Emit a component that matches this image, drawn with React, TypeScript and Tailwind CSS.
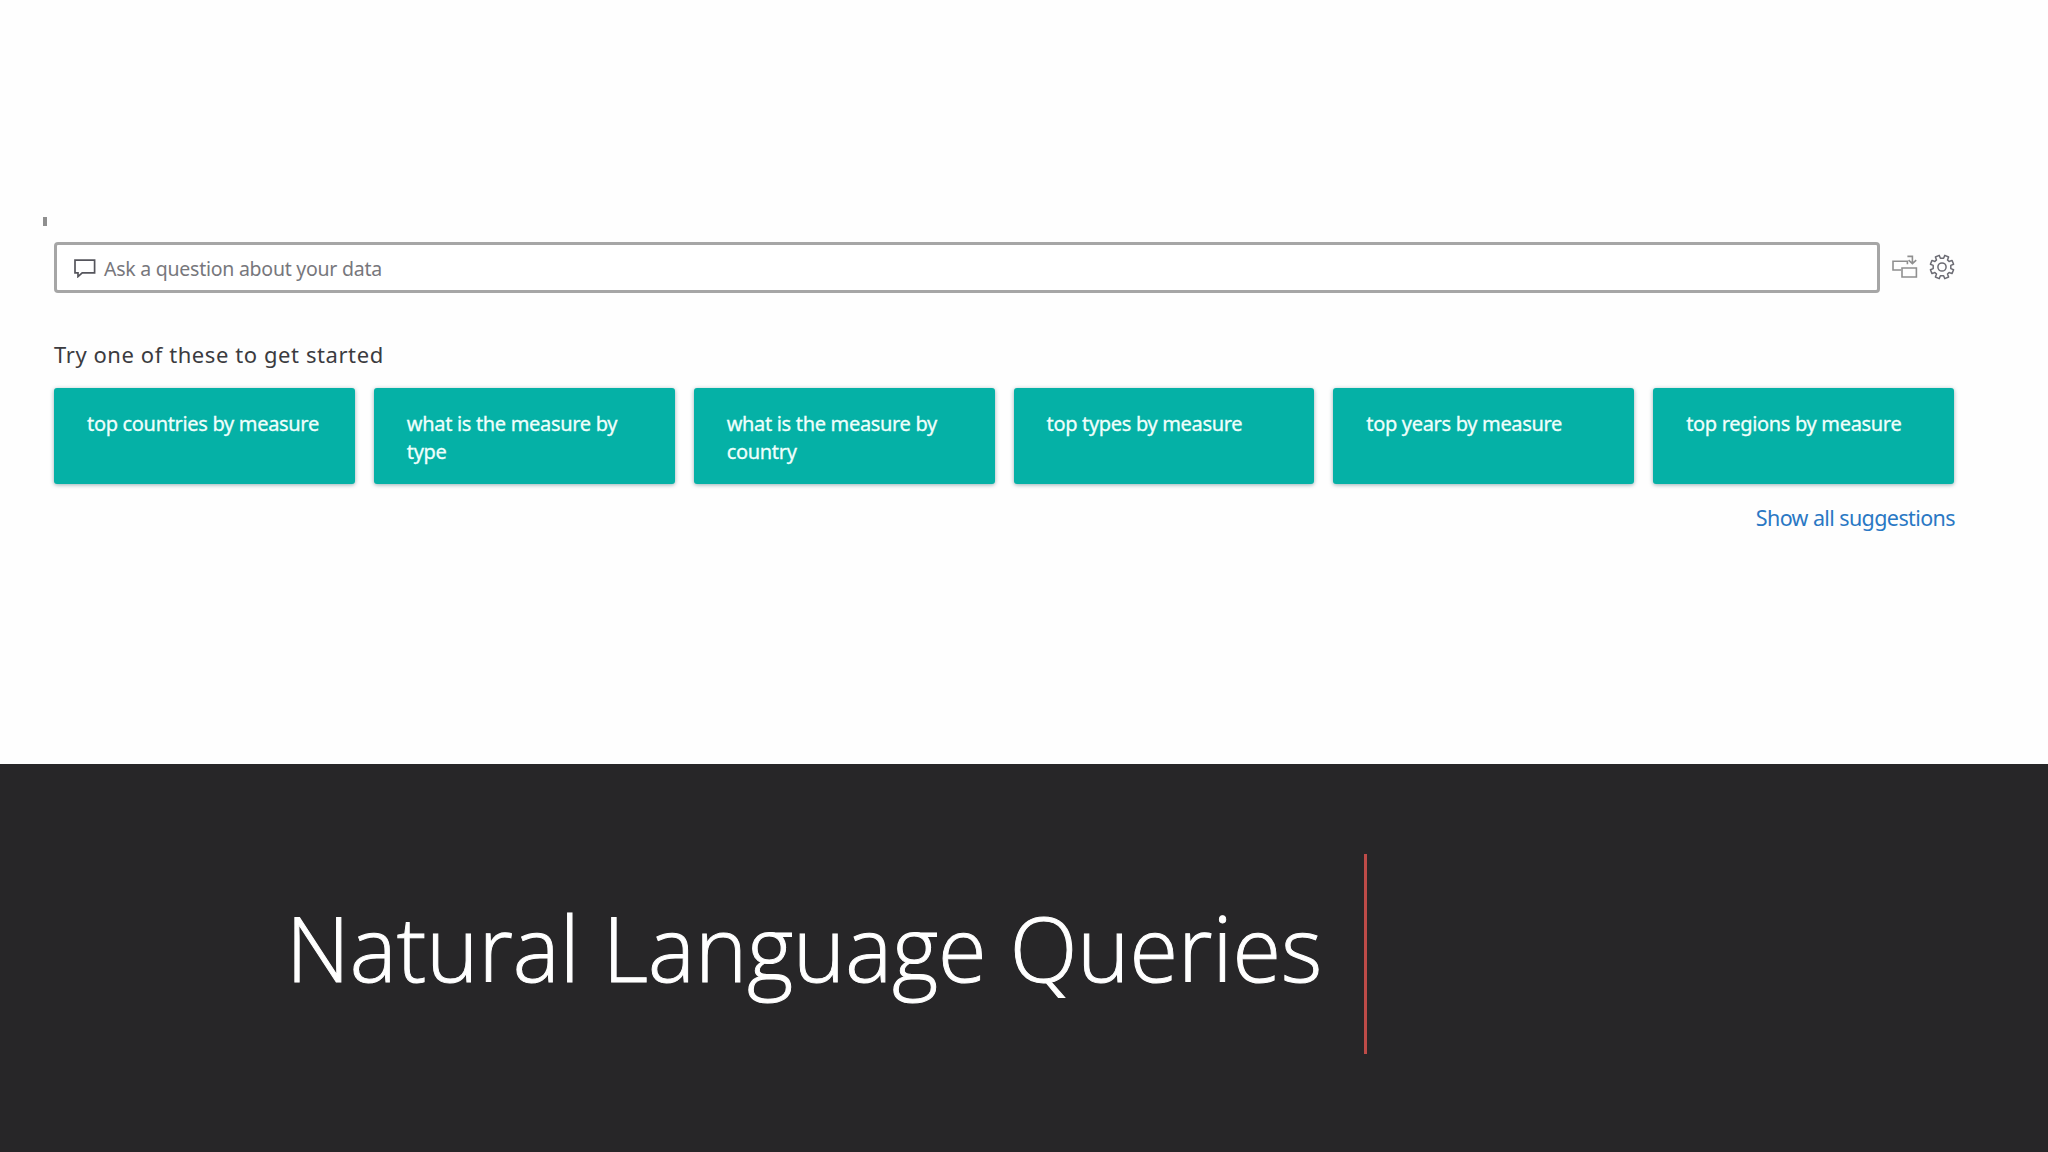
const suggestions = [
  "top countries by measure",
  "what is the measure by type",
  "what is the measure by country",
  "top types by measure",
  "top years by measure",
  "top regions by measure",
];

function CommentIcon() {
  return (
    <svg width="22" height="19" viewBox="0 0 22 19" fill="none" stroke="#55555c" strokeWidth="1.7">
      <path d="M1 1.2h19.6v12.6H8.2L4 17.6v-3.8H1z" />
    </svg>
  );
}

function ConvertIcon() {
  return (
    <svg width="26" height="24" viewBox="0 0 26 24" fill="none" stroke="#8f8f8f" strokeWidth="1.6">
      <path d="M9 15H1V6.2h14.4v3" />
      <path d="M10 13h14.4v9H10z" />
      <path d="M15.4 1.4h5v6.4M16.6 5.2l3.8 3.4L24.2 5.2" />
    </svg>
  );
}

function GearIcon() {
  return (
    <svg width="26" height="26" viewBox="0 0 26 26" fill="none" stroke="#6c6c74" strokeWidth="1.5" strokeLinejoin="round">
      <path d="M11.4 4.2 10.2 1.4 6.4 3l1.1 2.9-1.6 1.6L3 6.4 1.4 10.2l2.8 1.2v3.2l-2.8 1.2L3 19.6l2.9-1.1 1.6 1.6L6.4 23l3.8 1.6 1.2-2.8h3.2l1.2 2.8 3.8-1.6-1.1-2.9 1.6-1.6 2.9 1.1 1.6-3.8-2.8-1.2v-3.2l2.8-1.2L23 6.4l-2.9 1.1-1.6-1.6L19.6 3l-3.8-1.6-1.2 2.8z" />
      <circle cx="13" cy="13" r="4.1" />
    </svg>
  );
}

export default function App() {
  return (
    <div className="flex h-[1152px] w-[2048px] flex-col overflow-hidden bg-[#fefefe] font-['Noto_Sans',sans-serif]">
      <section className="h-[764px] pt-[217px]">
        <div className="ml-[43px] h-[9px] w-[4px] bg-[#8f8f8f]" />

        <div className="mt-4 ml-[54px] flex w-[1901px] items-center">
          <div className="flex h-[51px] w-[1826px] items-center rounded-[4px] border-[3px] border-[#a6a6a6] bg-white pt-[2px] pl-[17px]">
            <CommentIcon />
            <span className="ml-[8px] text-[19.5px] tracking-[-0.25px] whitespace-nowrap text-[#77777c]">
              Ask a question about your data
            </span>
          </div>
          <div className="mb-[2px] ml-[12px]">
            <ConvertIcon />
          </div>
          <div className="mb-[2px] ml-[11px]">
            <GearIcon />
          </div>
        </div>

        <h2 className="mt-[46px] ml-[54px] text-[22px] leading-[30px] tracking-[0.58px] text-[#3b3b3f]">
          Try one of these to get started
        </h2>

        <div className="mt-[19px] ml-[54px] grid w-[1900px] grid-cols-6 gap-[19px]">
          {suggestions.map((text) => (
            <div
              key={text}
              className="h-[96px] rounded-[3px] bg-[#05b1a6] px-[33px] pt-[22px] text-[20px] leading-[28px] tracking-[-0.32px] text-[#effffc] shadow-[0_1px_4px_rgba(0,60,70,0.4)] [-webkit-text-stroke:0.3px_#effffc]"
            >
              {text}
            </div>
          ))}
        </div>

        <div className="mt-[19px] ml-[54px] w-[1901px] text-right text-[21.5px] leading-[30px] tracking-[-0.6px] text-[#2a78c4]">
          Show all suggestions
        </div>
      </section>

      <section className="flex flex-1 bg-[#272628] pt-[90px]">
        <div className="w-[1364px] pt-[33px] pl-[286px]">
          <h1 className="origin-left scale-x-[0.972] font-['Open_Sans',sans-serif] text-[91px] leading-[120px] font-light whitespace-nowrap text-white [-webkit-text-stroke:1px_white]">
            Natural Language Queries
          </h1>
        </div>
        <div className="h-[200px] w-[3px] bg-[#be4b48]" />
      </section>
    </div>
  );
}
